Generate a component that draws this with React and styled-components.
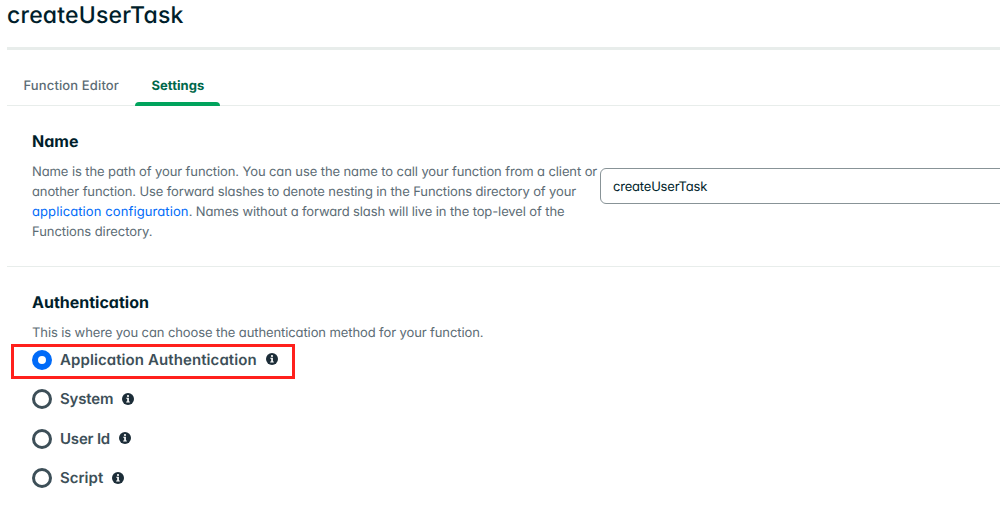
import React from "react";
import styled, { createGlobalStyle } from "styled-components";

const GlobalStyle = createGlobalStyle`
  * { box-sizing: border-box; }
  body {
    margin: 0;
    background: #fff;
    overflow: hidden;
    color: #001e2b;
    font-family: Inter, Lato, sans-serif;
    font-feature-settings: "cv11";
    text-rendering: geometricPrecision;
  }
`;

const Page = styled.main`
  height: 518px;
  padding-left: 7px;
  overflow: hidden;
`;

const Header = styled.header`
  height: 50px;
  border-bottom: 3px solid #e8edeb;
`;

const Title = styled.h1`
  margin: 0;
  font-size: 23px;
  font-weight: 500;
  line-height: 30px;
  letter-spacing: 0.2px;
`;

const Tabs = styled.nav`
  display: flex;
  height: 56px;
  padding-top: 16px;
  border-bottom: 1px solid #e8edeb;
`;

const Tab = styled.a`
  position: relative;
  height: 40px;
  padding: 0 16.5px;
  width: ${(p) => p.$width}px;
  line-height: 41px;
  font-size: 13px;
  white-space: nowrap;
  font-weight: ${(p) => (p.$active ? 700 : 500)};
  letter-spacing: ${(p) => p.$spacing}px;
  color: ${(p) => (p.$active ? "#00684a" : "#5c6c75")};

  &::after {
    content: "";
    display: ${(p) => (p.$active ? "block" : "none")};
    position: absolute;
    left: 0;
    right: 0;
    bottom: 0;
    height: 4px;
    border-radius: 4px 4px 0 0;
    background: #00a35c;
  }
`;

const Section = styled.section`
  padding: 25px 0 0 25px;
  height: ${(p) => p.$height};
  border-bottom: ${(p) => (p.$divided ? "1px solid #e8edeb" : "0")};
`;

const Heading = styled.h2`
  margin: 0;
  font-size: 16px;
  line-height: 20px;
  font-weight: 700;
`;

const Columns = styled.div`
  display: flex;
  padding-top: 11px;
`;

const Description = styled.p`
  flex: none;
  width: 568px;
  margin: 0;
  font-size: 13px;
  line-height: 20px;
  color: #5c6c75;
`;

const Line = styled.span`
  display: block;
  white-space: nowrap;
  letter-spacing: ${(p) => p.$spacing}px;
`;

const Link = styled.a`
  color: #016bf8;
  letter-spacing: 0.1px;
`;

const NameInput = styled.input`
  flex: none;
  width: 480px;
  height: 36px;
  margin-top: 6px;
  padding: 1px 12px 0;
  border: 1px solid #889397;
  border-radius: 6px;
  background: #fff;
  color: #001e2b;
  font: inherit;
  font-feature-settings: inherit;
  text-rendering: inherit;
  font-size: 13px;
  letter-spacing: -0.2px;
`;

const Intro = styled(Description)`
  padding-top: 11px;
`;

const Options = styled.div`
  display: flex;
  flex-direction: column;
  align-items: flex-start;
  margin-left: -21px;
`;

const Option = styled.label`
  display: flex;
  align-items: center;
  height: ${(p) => (p.$highlighted ? 35 : p.$height)}px;
  margin-top: ${(p) => (p.$highlighted ? 1 : 0)}px;
  width: 284px;
  padding-left: ${(p) => (p.$highlighted ? 18 : 21)}px;
  padding-bottom: ${(p) => (p.$highlighted ? 3 : 0)}px;
  border: ${(p) => (p.$highlighted ? "3px solid #ff201c" : "0")};
`;

const Radio = styled.span`
  flex: none;
  width: 20px;
  height: 20px;
  border-radius: 50%;
  border: ${(p) => (p.$checked ? "6px solid #016bf8" : "3px solid #3d4f58")};
  background: #fff;
`;

const OptionLabel = styled.span`
  margin-left: 8px;
  font-size: 15px;
  line-height: 20px;
  font-weight: 600;
  color: #3d4f58;
  white-space: nowrap;
  width: ${(p) => p.$width}px;
  letter-spacing: ${(p) => p.$spacing}px;
`;

const InfoSvg = styled.svg`
  flex: none;
  margin-left: 9px;
  margin-bottom: ${(p) => (p.$raised ? 2 : 1)}px;
  width: 12px;
  height: 12px;
`;

const InfoIcon = ({ raised }) => (
  <InfoSvg $raised={raised} viewBox="0 0 12 12" aria-label="More information">
    <circle cx="6" cy="6" r="6" fill="#1c2d38" />
    <circle cx="6" cy="3" r="1.1" fill="#fff" />
    <path d="M4.3 4.8H6.9V8.5H7.8V9.6H4.2V8.5H5.2V5.8H4.3Z" fill="#fff" />
  </InfoSvg>
);

const options = [
  { name: "Application Authentication", width: 197, spacing: 0.09, checked: true },
  { name: "System", width: 53, spacing: -0.15, height: 40 },
  { name: "User Id", width: 50, spacing: -0.2, height: 39 },
  { name: "Script", width: 43, spacing: 0, height: 40 },
];

export default function App() {
  return (
    <>
      <GlobalStyle />
      <Page>
        <Header>
          <Title>createUserTask</Title>
        </Header>
        <Tabs>
          <Tab $width={128} $spacing={0.13}>Function Editor</Tab>
          <Tab $active $width={85} $spacing={0.05}>Settings</Tab>
        </Tabs>
        <Section $height="161px" $divided>
          <Heading>Name</Heading>
          <Columns>
            <Description>
              <Line $spacing={-0.1}>Name is the path of your function. You can use the name to call your function from a client or</Line>
              <Line $spacing={-0.11}>another function. Use forward slashes to denote nesting in the Functions directory of your</Line>
              <Line $spacing={-0.11}><Link>application configuration</Link>. Names without a forward slash will live in the top-level of the</Line>
              <Line $spacing={-0.07}>Functions directory.</Line>
            </Description>
            <NameInput defaultValue="createUserTask" aria-label="Name" />
          </Columns>
        </Section>
        <Section $height="251px">
          <Heading>Authentication</Heading>
          <Intro>
            <Line $spacing={-0.1}>This is where you can choose the authentication method for your function.</Line>
          </Intro>
          <Options>
            {options.map((o) => (
              <Option key={o.name} $highlighted={o.checked} $height={o.height}>
                <Radio $checked={o.checked} />
                <OptionLabel $width={o.width} $spacing={o.spacing}>{o.name}</OptionLabel>
                <InfoIcon raised={o.checked} />
              </Option>
            ))}
          </Options>
        </Section>
      </Page>
    </>
  );
}
